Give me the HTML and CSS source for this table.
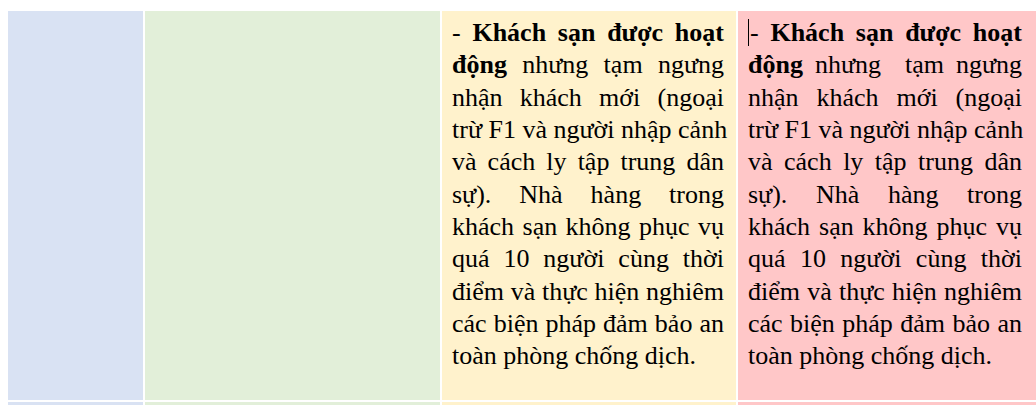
FILE: index.html
```html
<!DOCTYPE html>
<html lang="vi">
<head>
<meta charset="utf-8">
<link rel="stylesheet" href="styles.css">
</head>
<body>
<div class="table">
  <div class="row">
    <div class="cell c-blue"></div>
    <div class="cell c-green"></div>
    <div class="cell c-yellow">
      <p class="txt">
        <span class="ln">- <b>Khách sạn được hoạt</b></span>
        <span class="ln"><b>động</b> nhưng tạm ngưng</span>
        <span class="ln">nhận khách mới (ngoại</span>
        <span class="ln">trừ F1 và người nhập cảnh</span>
        <span class="ln">và cách ly tập trung dân</span>
        <span class="ln">sự). Nhà hàng trong</span>
        <span class="ln">khách sạn không phục vụ</span>
        <span class="ln">quá 10 người cùng thời</span>
        <span class="ln">điểm và thực hiện nghiêm</span>
        <span class="ln">các biện pháp đảm bảo an</span>
        <span class="ln ln-last">toàn phòng chống dịch.</span>
      </p>
    </div>
    <div class="cell c-pink">
      <p class="txt">
        <span class="ln"><span class="caret"></span>- <b>Khách sạn được hoạt</b></span>
        <span class="ln"><b>động</b> nhưng &nbsp;tạm ngưng</span>
        <span class="ln">nhận khách mới (ngoại</span>
        <span class="ln">trừ F1 và người nhập cảnh</span>
        <span class="ln">và cách ly tập trung dân</span>
        <span class="ln">sự). Nhà hàng trong</span>
        <span class="ln">khách sạn không phục vụ</span>
        <span class="ln">quá 10 người cùng thời</span>
        <span class="ln">điểm và thực hiện nghiêm</span>
        <span class="ln">các biện pháp đảm bảo an</span>
        <span class="ln ln-last">toàn phòng chống dịch.</span>
      </p>
    </div>
  </div>
  <div class="row row-next">
    <div class="cell c-blue"></div>
    <div class="cell c-green"></div>
    <div class="cell c-yellow"></div>
    <div class="cell c-pink"></div>
  </div>
</div>
</body>
</html>
```
FILE: styles.css
```css
html, body {
  margin: 0;
  padding: 0;
  background: #ffffff;
  overflow: hidden;
}
body {
  width: 1036px;
  height: 405px;
}
.table {
  padding: 11px 0 0 8px;
  display: flex;
  flex-direction: column;
  gap: 2px;
}
.row {
  display: grid;
  grid-template-columns: 135px 295px 294px 298px;
  column-gap: 2px;
  height: 389px;
}
.row-next {
  height: 20px;
}
.cell {
  box-sizing: border-box;
}
.c-blue { background: #d9e2f3; }
.c-green { background: #e2efd9; }
.c-yellow {
  background: #fff2cc;
  padding: 6px 12px 0 10px;
}
.c-pink {
  background: #ffc7c8;
  padding: 6px 14px 0 10px;
}
.txt {
  margin: 0;
  font-family: "Liberation Serif", "Times New Roman", serif;
  font-size: 26px;
  line-height: 32.33px;
  color: #000000;
}
.ln {
  display: block;
  white-space: nowrap;
  text-align: justify;
  text-align-last: justify;
}
.ln-last {
  text-align-last: left;
}
.txt b {
  font-weight: bold;
}
.caret {
  display: inline-block;
  width: 1px;
  height: 27px;
  background: #000000;
  vertical-align: -5px;
  margin-right: 1px;
}
```
